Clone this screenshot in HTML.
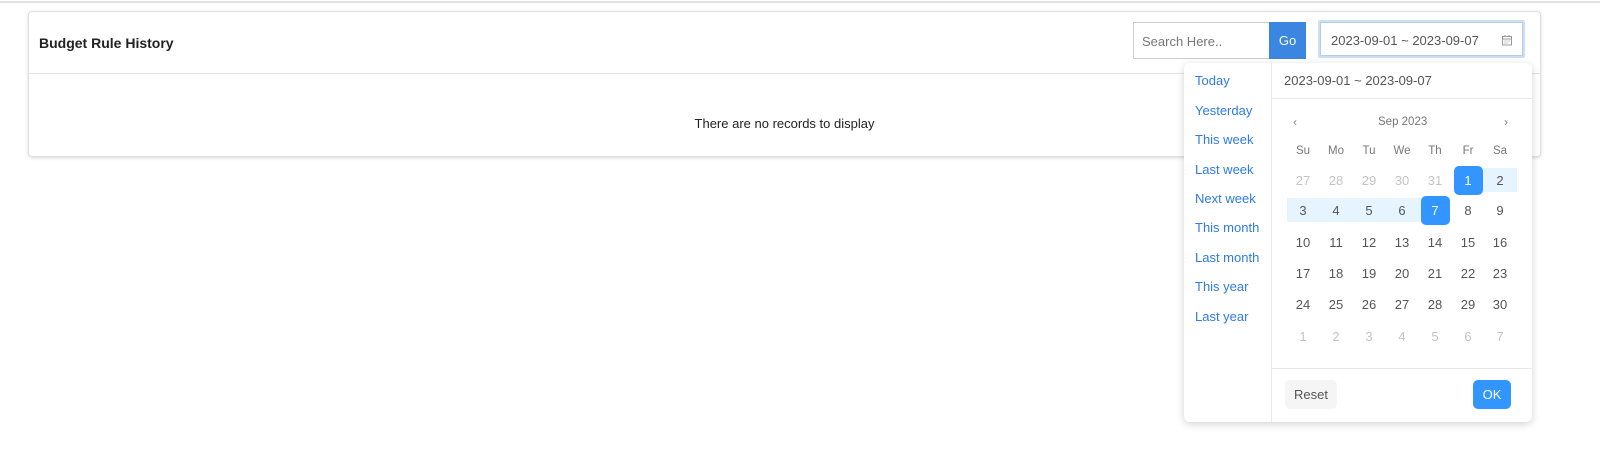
<!DOCTYPE html>
<html><head><style>
*{box-sizing:border-box;margin:0;padding:0}
body{width:1600px;height:455px;background:#fff;font-family:"Liberation Sans",sans-serif;position:relative;overflow:hidden;color:#333}
.top{position:absolute;left:0;top:0;width:1600px;height:3px;border-bottom:2px solid #e3e3e3}
.card{position:absolute;left:28px;top:11px;width:1513px;height:146px;border:1px solid #e0e0e0;border-radius:4px;box-shadow:0 1px 3px rgba(0,0,0,.15)}
.hdr{height:62px;border-bottom:1px solid #e3e3e3;position:relative}
.title{position:absolute;left:10px;top:23px;font-size:14px;font-weight:bold;color:#222}
.empty{position:absolute;left:0;width:100%;top:104px;text-align:center;font-size:13px;color:#222}
.search{position:absolute;left:1133px;top:22px;width:137px;height:37px;border:1px solid #ccc;font-size:13px;color:#777;padding:11px 8px}
.go{position:absolute;left:1269px;top:22px;width:37px;height:37px;background:#3b86e0;color:#fff;font-size:13px;text-align:center;line-height:37px}
.date{position:absolute;left:1318px;top:20px;width:207px;height:38px;border:2px solid #c9e0f7;box-shadow:inset 0 0 0 1px #bcd;border-radius:2px;font-size:13px;color:#555;padding:11px 11px}
.pop{position:absolute;left:1184px;top:63px;width:348px;height:359px;background:#fff;border-radius:6px;box-shadow:0 2px 8px rgba(0,0,0,.18)}
.side{position:absolute;left:0;top:0;width:88px;height:100%;border-right:1px solid #e8e8e8}
.side div{position:absolute;left:11px;font-size:13px;color:#2e7be6}
.ph{position:absolute;left:100px;top:10px;font-size:13px;color:#555}
.hl{position:absolute;left:88px;width:260px;height:1px;background:#e8e8e8}
.c{position:absolute;width:29px;height:29px;margin-left:-14.5px;margin-top:-14.5px;text-align:center;line-height:29px;font-size:13px;color:#555}
.g{color:#c4c4c4}.s{background:#3395ff;color:#fff;border-radius:5px}
.wd{position:absolute;font-size:11.5px;color:#777;width:30px;margin-left:-15px;text-align:center}
.rng{position:absolute;background:#e6f4ff;height:24px}
.btn{position:absolute;top:317px;height:29px;border-radius:5px;font-size:13px;line-height:29px;text-align:center}
</style></head><body>
<div class="top"></div>
<div class="card"><div class="hdr"><div class="title">Budget Rule History</div></div>
<div class="empty" style="top:104px">There are no records to display</div></div>
<div class="search">Search Here..</div><div class="go">Go</div>
<div class="date">2023-09-01 ~ 2023-09-07 <svg style="position:absolute;right:10px;top:12px" width="12" height="12" viewBox="0 0 12 12" fill="none" stroke="#999" stroke-width="1"><rect x="1.5" y="2.5" width="9" height="8.5"/><line x1="1.5" y1="5" x2="10.5" y2="5"/><line x1="4" y1="1" x2="4" y2="3"/><line x1="8" y1="1" x2="8" y2="3"/><path d="M3.5 7h1M5.5 7h1M7.5 7h1M3.5 9h1M5.5 9h1"/></svg></div>
<div class="pop">
<div class="side">
<div style="top:10px">Today</div><div style="top:40px">Yesterday</div><div style="top:69px">This week</div><div style="top:99px">Last week</div><div style="top:128px">Next week</div><div style="top:157px">This month</div><div style="top:187px">Last month</div><div style="top:216px">This year</div><div style="top:246px">Last year</div>
</div>
<div class="ph">2023-09-01 ~ 2023-09-07</div>
<div class="hl" style="top:35px"></div>
<div style="position:absolute;left:109px;top:52px;font-size:12px;color:#888">&lsaquo;</div>
<div style="position:absolute;left:194px;top:53px;font-size:11.5px;color:#777">Sep 2023</div>
<div style="position:absolute;left:320px;top:52px;font-size:12px;color:#888">&rsaquo;</div>
<div id="cal"></div>
<div class="hl" style="top:305px"></div>
<div class="btn" style="left:101px;width:52px;background:#f5f5f5;color:#555">Reset</div>
<div class="btn" style="left:289px;width:38px;background:#3395ff;color:#fff">OK</div>
</div>
<script>
var xs=[119,152,185,218,251,284,316],ys=[117,147,179,210,241,273];
var h='<div class="rng" style="left:299px;width:34px;top:105px"></div><div class="rng" style="left:103px;width:163px;top:135px"></div>';
var w=['Su','Mo','Tu','We','Th','Fr','Sa'];
for(var i=0;i<7;i++)h+='<div class="wd" style="left:'+xs[i]+'px;top:82px">'+w[i]+'</div>';
var d=[27,28,29,30,31];for(var i=1;i<=30;i++)d.push(i);for(var i=1;i<=7;i++)d.push(i);
for(var k=0;k<42;k++){var r=Math.floor(k/7),c=k%7,cl='c';if(k<5||k>=35)cl+=' g';if(k==5||k==11)cl+=' s';
h+='<div class="'+cl+'" style="left:'+xs[c]+'px;top:'+ys[r]+'px">'+d[k]+'</div>';}
document.getElementById('cal').innerHTML=h;
</script>
</body></html>
